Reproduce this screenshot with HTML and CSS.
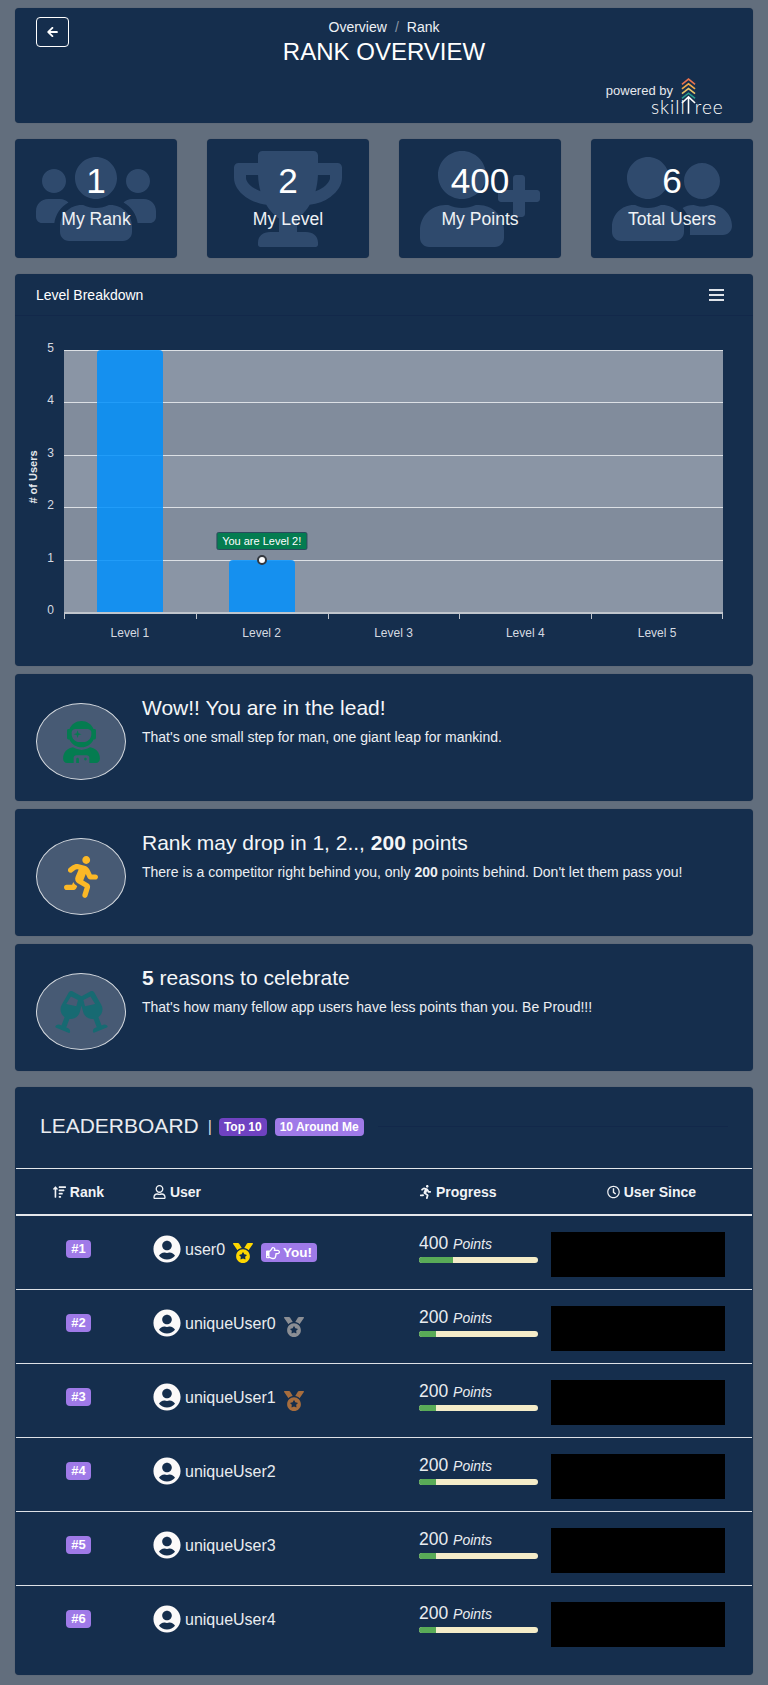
FILE: index.html
```html
<!DOCTYPE html>
<html lang="en">
<head>
    <meta charset="UTF-8">
    <meta name="viewport" content="width=device-width, initial-scale=1.0">
    <title>Rank Overview</title>
    <link rel="stylesheet" href="styles.css">
</head>
<body>
    <svg class="defs" aria-hidden="true">
        <symbol id="i-user-circle" viewBox="0 0 496 512"><path d="M248 8C111 8 0 119 0 256s111 248 248 248 248-111 248-248S385 8 248 8zm0 96c48.6 0 88 39.4 88 88s-39.4 88-88 88-88-39.4-88-88 39.4-88 88-88zm0 344c-58.7 0-111.3-26.6-146.5-68.2 18.8-35.4 55.6-59.8 98.5-59.8 2.4 0 4.8.4 7.1 1.1 13 4.2 26.6 6.9 40.9 6.9 14.3 0 28-2.7 40.9-6.9 2.3-.7 4.7-1.1 7.1-1.1 42.9 0 79.7 24.4 98.5 59.8C359.3 421.4 306.7 448 248 448z"/></symbol>
        <symbol id="i-medal" viewBox="0 0 512 512"><path d="M223.75 130.75L154.62 15.54A31.997 31.997 0 0 0 127.18 0H16.03C3.08 0-4.5 14.57 2.92 25.18l111.27 158.96c29.72-27.77 67.52-46.83 109.56-53.39zM495.97 0H384.82c-11.24 0-21.66 5.9-27.44 15.54l-69.13 115.21c42.04 6.56 79.84 25.62 109.56 53.38L509.08 25.18C516.5 14.57 508.92 0 495.97 0zM256 160c-97.2 0-176 78.8-176 176s78.8 176 176 176 176-78.8 176-176-78.8-176-176-176zm92.52 157.26l-37.93 36.96 8.97 52.22c1.6 9.36-8.26 16.51-16.65 12.09L256 393.88l-46.9 24.65c-8.4 4.45-18.25-2.74-16.65-12.09l8.97-52.22-37.93-36.96c-6.82-6.64-3.05-18.23 6.35-19.59l52.43-7.64 23.43-47.52c2.11-4.28 6.19-6.39 10.28-6.39 4.11 0 8.22 2.14 10.34 6.39l23.43 47.52 52.43 7.64c9.4 1.36 13.17 12.95 6.35 19.59z"/></symbol>
        <symbol id="i-running" viewBox="0 0 416 512"><path d="M272 96c26.51 0 48-21.49 48-48S298.51 0 272 0s-48 21.49-48 48 21.49 48 48 48zM113.69 317.47l-14.8 34.52H32c-17.67 0-32 14.33-32 32s14.33 32 32 32h77.45c19.25 0 36.58-11.44 44.11-29.09l8.79-20.52-10.67-6.3c-17.32-10.23-30.06-25.37-37.99-42.61zM384 223.99h-44.03l-26.06-53.25c-12.5-25.55-35.45-44.23-61.78-50.94l-71.08-21.14c-28.3-6.8-57.77-.55-80.84 17.14l-39.67 30.41c-14.03 10.75-16.69 30.83-5.92 44.86s30.84 16.66 44.86 5.92l39.69-30.41c7.67-5.89 17.44-8 25.27-6.14l14.7 4.37-37.46 87.39c-12.62 29.48-1.31 64.01 26.3 80.31l84.98 50.17-27.47 87.73c-5.28 16.86 4.11 34.81 20.97 40.09 3.19 1 6.41 1.48 9.58 1.48 13.61 0 26.23-8.77 30.52-22.45l31.64-101.06c5.91-20.77-2.89-43.08-21.64-54.39l-61.24-36.14 31.31-78.28 20.27 41.43c8 16.34 24.92 26.89 43.11 26.89H384c17.67 0 32-14.33 32-32s-14.33-31.99-32-31.99z"/></symbol>
    </svg>

    <header class="card page-header">
        <a class="back-btn" href="#">
            <svg class="back-icon" viewBox="0 0 448 512"><path d="M257.5 445.1l-22.2 22.2c-9.4 9.4-24.6 9.4-33.9 0L7 273c-9.4-9.4-9.4-24.6 0-33.9L201.4 44.7c9.4-9.4 24.6-9.4 33.9 0l22.2 22.2c9.5 9.5 9.3 25-.4 34.3L136.6 216H424c13.3 0 24 10.7 24 24v32c0 13.3-10.7 24-24 24H136.6l120.5 114.8c9.8 9.3 10 24.8.4 34.3z"/></svg>
        </a>
        <div class="crumbs"><span>Overview</span><span class="crumb-sep">/</span><span>Rank</span></div>
        <h1 class="page-title">RANK OVERVIEW</h1>
        <div class="powered">
            <span class="powered-by">powered by</span>
            <div class="logo">
                <svg class="logo-arrows" viewBox="0 0 16 38" fill="none" stroke-width="1.7">
                    <path d="M1 6.5 8 1 15 6.5" stroke="#e8734f"/>
                    <path d="M1 11.5 8 6 15 11.5" stroke="#f0a94a"/>
                    <path d="M1 16.5 8 11 15 16.5" stroke="#e9c46a"/>
                    <path d="M1 21.5 8 16 15 21.5" stroke="#2a9d8f"/>
                    <path d="M1 26.5 8 20 15 26.5M8 20V38" stroke="#fff"/>
                </svg>
                <span class="logo-text">skill<span class="logo-gap"></span>ree</span>
            </div>
        </div>
    </header>

    <section class="stats">
        <div class="card stat">
            <svg class="stat-icon" viewBox="0 0 640 512"><path d="M96 224c35.3 0 64-28.7 64-64s-28.7-64-64-64-64 28.7-64 64 28.7 64 64 64zm448 0c35.3 0 64-28.7 64-64s-28.7-64-64-64-64 28.7-64 64 28.7 64 64 64zm32 32h-64c-17.6 0-33.5 7.1-45.1 18.6 40.3 22.1 68.9 62 75.1 109.4h66c17.7 0 32-14.3 32-32v-32c0-35.3-28.7-64-64-64zm-256 0c61.9 0 112-50.1 112-112S381.9 32 320 32 208 82.1 208 144s50.1 112 112 112zm76.8 32h-8.3c-20.8 10-43.9 16-68.5 16s-47.6-6-68.5-16h-8.3C179.6 288 128 339.6 128 403.2V432c0 26.5 21.5 48 48 48h288c26.5 0 48-21.5 48-48v-28.8c0-63.6-51.6-115.2-115.2-115.2zm-223.7-13.4C161.5 263.1 145.6 256 128 256H64c-35.3 0-64 28.7-64 64v32c0 17.7 14.3 32 32 32h65.9c6.3-47.4 34.9-87.3 75.2-109.4z"/></svg>
            <div class="stat-value">1</div>
            <div class="stat-label">My Rank</div>
        </div>
        <div class="card stat">
            <svg class="stat-icon trophy" viewBox="0 0 576 512"><path d="M552 64H448V24c0-13.3-10.7-24-24-24H152c-13.3 0-24 10.7-24 24v40H24C10.7 64 0 74.7 0 88v56c0 35.7 22.5 72.4 61.9 100.7 31.5 22.7 69.8 37.1 110 41.7C203.3 338.5 240 360 240 360v72h-48c-35.3 0-64 20.7-64 56v12c0 6.6 5.4 12 12 12h296c6.6 0 12-5.4 12-12v-12c0-35.3-28.7-56-64-56h-48v-72s36.7-21.5 68.1-73.6c40.3-4.6 78.6-19 110-41.7 39.3-28.3 61.9-65 61.9-100.7V88c0-13.3-10.7-24-24-24zM99.3 192.8C74.9 175.2 64 155.6 64 144v-16h64.2c1 32.6 5.8 61.2 12.8 86.2-15.1-5.2-29.2-12.4-41.7-21.4zM512 144c0 16.1-17.7 36.1-35.3 48.8-12.5 9-26.7 16.2-41.8 21.4 7-25 11.8-53.6 12.8-86.2H512v16z"/></svg>
            <div class="stat-value">2</div>
            <div class="stat-label">My Level</div>
        </div>
        <div class="card stat">
            <svg class="stat-icon" viewBox="0 0 640 512"><path d="M624 208h-64v-64c0-8.8-7.2-16-16-16h-32c-8.8 0-16 7.2-16 16v64h-64c-8.8 0-16 7.2-16 16v32c0 8.8 7.2 16 16 16h64v64c0 8.8 7.2 16 16 16h32c8.8 0 16-7.2 16-16v-64h64c8.8 0 16-7.2 16-16v-32c0-8.8-7.2-16-16-16zm-400 48c70.7 0 128-57.3 128-128S294.7 0 224 0 96 57.3 96 128s57.3 128 128 128zm89.6 32h-16.7c-22.2 10.2-46.9 16-72.9 16s-50.6-5.8-72.9-16h-16.7C60.2 288 0 348.2 0 422.4V464c0 26.5 21.5 48 48 48h352c26.5 0 48-21.5 48-48v-41.6c0-74.2-60.2-134.4-134.4-134.4z"/></svg>
            <div class="stat-value">400</div>
            <div class="stat-label">My Points</div>
        </div>
        <div class="card stat">
            <svg class="stat-icon" viewBox="0 0 640 512"><path d="M192 256c61.9 0 112-50.1 112-112S253.9 32 192 32 80 82.1 80 144s50.1 112 112 112zm76.8 32h-8.3c-20.8 10-43.9 16-68.5 16s-47.6-6-68.5-16h-8.3C51.6 288 0 339.6 0 403.2V432c0 26.5 21.5 48 48 48h288c26.5 0 48-21.5 48-48v-28.8c0-63.6-51.6-115.2-115.2-115.2zM480 256c53 0 96-43 96-96s-43-96-96-96-96 43-96 96 43 96 96 96zm48 32h-3.8c-13.9 4.8-28.6 8-44.2 8s-30.3-3.2-44.2-8H432c-20.4 0-39.2 5.9-55.7 15.4 24.4 26.3 39.7 61.2 39.7 99.8v38.4c0 2.2-.5 4.3-.6 6.4H592c26.5 0 48-21.5 48-48 0-61.9-50.1-112-112-112z"/></svg>
            <div class="stat-value">6</div>
            <div class="stat-label">Total Users</div>
        </div>
    </section>

    <section class="card chart-card">
        <div class="chart-head">
            <span>Level Breakdown</span>
            <span class="burger"><i></i><i></i><i></i></span>
        </div>
        <div class="chart">
            <div class="y-title">
                <span># of Users</span>
            </div>
            <div class="y-axis">
                <span>5</span><span>4</span><span>3</span><span>2</span><span>1</span><span>0</span>
            </div>
            <div class="plot">
                <div class="band"></div><div class="band"></div><div class="band"></div><div class="band"></div><div class="band"></div>
                <div class="bars">
                    <div class="bar-slot"><div class="bar bar-full"></div></div>
                    <div class="bar-slot">
                        <div class="bar bar-one">
                            <div class="marker"></div>
                            <div class="chart-tip">You are Level 2!</div>
                        </div>
                    </div>
                    <div class="bar-slot"></div>
                    <div class="bar-slot"></div>
                    <div class="bar-slot"></div>
                </div>
            </div>
            <div class="x-axis">
                <span>Level 1</span><span>Level 2</span><span>Level 3</span><span>Level 4</span><span>Level 5</span>
            </div>
        </div>
    </section>

    <section class="card note">
        <div class="note-badge">
            <svg class="badge-icon astronaut" viewBox="0 0 448 512"><path d="M64 224h13.5c24.7 56.5 80.9 96 146.5 96s121.8-39.5 146.5-96H384c8.8 0 16-7.2 16-16v-96c0-8.8-7.2-16-16-16h-13.5C345.8 39.5 289.6 0 224 0S102.2 39.5 77.5 96H64c-8.8 0-16 7.2-16 16v96c0 8.8 7.2 16 16 16zm40-88c0-22 21.5-40 48-40h144c26.5 0 48 18 48 40v24c0 53-43 96-96 96h-48c-53 0-96-43-96-96v-24zm72 72l12-36 36-12-36-12-12-36-12 36-36 12 36 12 12 36zm151.6 113.4C297.7 340.7 262.2 352 224 352s-73.7-11.3-103.6-30.6C52.9 328.5 0 385 0 454.4v9.6c0 26.5 21.5 48 48 48h80v-64c0-17.7 14.3-32 32-32h128c17.7 0 32 14.3 32 32v64h80c26.5 0 48-21.5 48-48v-9.6c0-69.4-52.9-125.9-120.4-133zM272 448c-8.8 0-16 7.2-16 16s7.2 16 16 16 16-7.2 16-16-7.2-16-16-16zm-96 0c-8.8 0-16 7.2-16 16v48h32v-48c0-8.8-7.2-16-16-16z"/></svg>
        </div>
        <div class="note-body">
            <h4 class="note-title">Wow!! You are in the lead!</h4>
            <p class="note-text">That's one small step for man, one giant leap for mankind.</p>
        </div>
    </section>

    <section class="card note">
        <div class="note-badge">
            <svg class="badge-icon amber"><use href="#i-running"/></svg>
        </div>
        <div class="note-body">
            <h4 class="note-title">Rank may drop in 1, 2.., <b>200</b> points</h4>
            <p class="note-text">There is a competitor right behind you, only <b>200</b> points behind. Don't let them pass you!</p>
        </div>
    </section>

    <section class="card note">
        <div class="note-badge">
            <svg class="badge-icon glasses" viewBox="0 0 640 512"><path fill-rule="evenodd" d="M639.4 433.6c-8.4-20.4-31.8-30.1-52.2-21.6l-22.1 9.2-38.7-101.9c47.9-35 64.8-100.3 34.5-152.8L474.3 16c-8.8-15.3-27.7-21.1-43.5-13.5L320 62.6 209.2 2.5C193.4-5.1 174.5.7 165.7 16L79.3 166.5c-30.3 52.5-13.4 117.8 34.5 152.8L75.1 421.2 53 412c-20.4-8.5-43.8 1.2-52.2 21.6-1.7 4.1.2 8.8 4.3 10.5l162.3 67.4c4.1 1.7 8.7-.2 10.4-4.3 8.4-20.4-1.2-43.8-21.6-52.3l-22.1-9.2L173 340.7c4.4.5 8.8 1.3 13.1 1.3 51.7 0 99.4-33.1 113.4-85.3l20.5-75.9 20.4 75.9c14 52.2 61.7 85.3 113.4 85.3 4.3 0 8.7-.8 13.1-1.3l38.7 101.9-22.1 9.2c-20.4 8.5-30.1 31.9-21.6 52.3 1.7 4.1 6.4 6 10.4 4.3l162.3-67.4c4.2-1.7 6.1-6.4 4.4-10.5zM134 158l57-90 86 43-20 76zM363 187l-20-76 86-43 57 90z"/></svg>
        </div>
        <div class="note-body">
            <h4 class="note-title"><b>5</b> reasons to celebrate</h4>
            <p class="note-text">That's how many fellow app users have less points than you. Be Proud!!!</p>
        </div>
    </section>

    <section class="card board">
        <div class="board-head">
            <h4 class="board-title">LEADERBOARD</h4>
            <span class="board-sep">|</span>
            <span class="tag tag-active">Top 10</span>
            <span class="tag">10 Around Me</span>
            <span class="board-rule"></span>
        </div>
        <table class="rank-table">
            <thead>
                <tr>
                    <th class="col-rank"><svg class="th-icon" viewBox="0 0 512 512"><path d="M304 416h-64a16 16 0 0 0-16 16v32a16 16 0 0 0 16 16h64a16 16 0 0 0 16-16v-32a16 16 0 0 0-16-16zM16 160h48v304a16 16 0 0 0 16 16h32a16 16 0 0 0 16-16V160h48c14.21 0 21.38-17.24 11.31-27.31l-80-96a16 16 0 0 0-22.62 0l-80 96C-5.35 142.74 1.77 160 16 160zm416 0H240a16 16 0 0 0-16 16v32a16 16 0 0 0 16 16h192a16 16 0 0 0 16-16v-32a16 16 0 0 0-16-16zm-64 128H240a16 16 0 0 0-16 16v32a16 16 0 0 0 16 16h128a16 16 0 0 0 16-16v-32a16 16 0 0 0-16-16zM496 32H240a16 16 0 0 0-16 16v32a16 16 0 0 0 16 16h256a16 16 0 0 0 16-16V48a16 16 0 0 0-16-16z"/></svg> Rank</th>
                    <th class="col-user"><svg class="th-icon" viewBox="0 0 448 512"><path d="M313.6 304c-28.7 0-42.5 16-89.6 16-47.1 0-60.8-16-89.6-16C60.2 304 0 364.2 0 438.4V464c0 26.5 21.5 48 48 48h352c26.5 0 48-21.5 48-48v-25.6c0-74.2-60.2-134.4-134.4-134.4zM400 464H48v-25.6c0-47.6 38.8-86.4 86.4-86.4 14.6 0 38.3 16 89.6 16 51.7 0 74.9-16 89.6-16 47.6 0 86.4 38.8 86.4 86.4V464zM224 288c79.5 0 144-64.5 144-144S303.5 0 224 0 80 64.5 80 144s64.5 144 144 144zm0-240c52.9 0 96 43.1 96 96s-43.1 96-96 96-96-43.1-96-96 43.1-96 96-96z"/></svg> User</th>
                    <th class="col-progress"><svg class="th-icon" viewBox="0 0 416 512"><use href="#i-running"/></svg> Progress</th>
                    <th class="col-since"><svg class="th-icon" viewBox="0 0 512 512"><path d="M256 8C119 8 8 119 8 256s111 248 248 248 248-111 248-248S393 8 256 8zm0 448c-110.5 0-200-89.5-200-200S145.5 56 256 56s200 89.5 200 200-89.5 200-200 200zm61.8-104.4l-84.9-61.7c-3.1-2.3-4.9-5.9-4.9-9.7V116c0-6.6 5.4-12 12-12h32c6.6 0 12 5.4 12 12v141.7l66.8 48.6c5.4 3.9 6.5 11.4 2.6 16.8L334.6 349c-3.9 5.3-11.4 6.5-16.8 2.6z"/></svg> User Since</th>
                </tr>
            </thead>
            <tbody>
                <tr>
                    <td class="col-rank"><span class="tag rank-tag">#1</span></td>
                    <td class="col-user"><div class="user-cell"><svg class="avatar"><use href="#i-user-circle"/></svg><span class="user-name">user0</span><svg class="medal gold"><use href="#i-medal"/></svg><span class="tag you-tag"><svg class="you-icon" viewBox="0 0 512 512"><path d="M428.8 137.6h-86.177a115.52 115.52 0 0 0 2.176-22.4c0-47.914-35.072-83.2-92-83.2-45.314 0-57.002 48.537-75.707 78.784-7.735 12.413-16.994 23.317-25.851 33.253l-.131.146-.129.148C135.662 161.807 127.764 168 120.8 168h-2.679c-5.747-4.952-13.536-8-22.12-8H32c-17.673 0-32 12.894-32 28.8v230.4C0 435.106 14.327 448 32 448h64c8.584 0 16.373-3.048 22.12-8h2.679c28.688 0 67.137 40 127.2 40h21.299c62.542 0 98.8-38.658 99.94-91.145 12.482-17.813 18.491-40.785 15.985-62.791A93.148 93.148 0 0 0 393.152 304H428.8c45.435 0 83.2-37.584 83.2-83.2 0-45.099-38.101-83.2-83.2-83.2zm0 118.4h-91.026c12.837 14.669 14.415 42.825-4.95 61.05 11.227 19.646 1.687 45.624-12.925 53.625 6.524 39.128-10.076 61.325-50.6 61.325H248c-45.491 0-77.21-35.913-120-39.676V215.571c25.239-2.964 42.966-21.222 59.075-39.596 11.275-12.65 21.725-25.3 30.799-39.875C232.355 112.712 244.006 80 252.8 80c23.375 0 44 8.8 44 35.2 0 35.2-26.4 53.075-26.4 70.4h158.4c18.425 0 35.2 16.5 35.2 35.2 0 18.975-16.225 35.2-35.2 35.2zM88 384c0 13.255-10.745 24-24 24s-24-10.745-24-24 10.745-24 24-24 24 10.745 24 24z"/></svg>You!</span></div></td>
                    <td class="col-progress"><div class="points"><span class="pts-num">400</span> <em>Points</em></div><div class="track"><div class="fill" style="width:28.6%"></div></div></td>
                    <td class="col-since"><div class="masked"></div></td>
                </tr>
                <tr>
                    <td class="col-rank"><span class="tag rank-tag">#2</span></td>
                    <td class="col-user"><div class="user-cell"><svg class="avatar"><use href="#i-user-circle"/></svg><span class="user-name">uniqueUser0</span><svg class="medal silver"><use href="#i-medal"/></svg></div></td>
                    <td class="col-progress"><div class="points"><span class="pts-num">200</span> <em>Points</em></div><div class="track"><div class="fill" style="width:14.3%"></div></div></td>
                    <td class="col-since"><div class="masked"></div></td>
                </tr>
                <tr>
                    <td class="col-rank"><span class="tag rank-tag">#3</span></td>
                    <td class="col-user"><div class="user-cell"><svg class="avatar"><use href="#i-user-circle"/></svg><span class="user-name">uniqueUser1</span><svg class="medal bronze"><use href="#i-medal"/></svg></div></td>
                    <td class="col-progress"><div class="points"><span class="pts-num">200</span> <em>Points</em></div><div class="track"><div class="fill" style="width:14.3%"></div></div></td>
                    <td class="col-since"><div class="masked"></div></td>
                </tr>
                <tr>
                    <td class="col-rank"><span class="tag rank-tag">#4</span></td>
                    <td class="col-user"><div class="user-cell"><svg class="avatar"><use href="#i-user-circle"/></svg><span class="user-name">uniqueUser2</span></div></td>
                    <td class="col-progress"><div class="points"><span class="pts-num">200</span> <em>Points</em></div><div class="track"><div class="fill" style="width:14.3%"></div></div></td>
                    <td class="col-since"><div class="masked"></div></td>
                </tr>
                <tr>
                    <td class="col-rank"><span class="tag rank-tag">#5</span></td>
                    <td class="col-user"><div class="user-cell"><svg class="avatar"><use href="#i-user-circle"/></svg><span class="user-name">uniqueUser3</span></div></td>
                    <td class="col-progress"><div class="points"><span class="pts-num">200</span> <em>Points</em></div><div class="track"><div class="fill" style="width:14.3%"></div></div></td>
                    <td class="col-since"><div class="masked"></div></td>
                </tr>
                <tr class="last-row">
                    <td class="col-rank"><span class="tag rank-tag">#6</span></td>
                    <td class="col-user"><div class="user-cell"><svg class="avatar"><use href="#i-user-circle"/></svg><span class="user-name">uniqueUser4</span></div></td>
                    <td class="col-progress"><div class="points"><span class="pts-num">200</span> <em>Points</em></div><div class="track"><div class="fill" style="width:14.3%"></div></div></td>
                    <td class="col-since"><div class="masked"></div></td>
                </tr>
            </tbody>
        </table>
    </section>
</body>
</html>
```

FILE: styles.css
```css
html, body {
    height: 100%;
}
body {
    margin: 0;
    padding: 8px 15px 0;
    box-sizing: border-box;
    background-color: #626e7d;
    color: #fff;
    font-family: "Liberation Sans", Arial, sans-serif;
    font-size: 14px;
}
.defs {
    position: absolute;
    width: 0;
    height: 0;
}
.card {
    background-color: #152e4d;
    border-radius: 4px;
    box-shadow: 0 0 1px rgba(0, 0, 0, 0.3);
}

/* header */
.page-header {
    position: relative;
    height: 115px;
    box-sizing: border-box;
    padding-top: 10px;
    text-align: center;
}
.back-btn {
    position: absolute;
    left: 21px;
    top: 9px;
    width: 31px;
    height: 28px;
    border: 1px solid #fff;
    border-radius: 4px;
    display: flex;
    align-items: center;
    justify-content: center;
}
.back-icon {
    width: 11px;
    height: 12px;
    fill: #fff;
}
.crumbs {
    font-size: 14px;
    line-height: 18px;
    color: #eef1f5;
}
.crumb-sep {
    margin: 0 8px;
    color: #8b97a6;
}
.page-title {
    margin: 1px 0 0;
    font-size: 24px;
    line-height: 29px;
    font-weight: 400;
}
.powered {
    position: absolute;
    right: 32px;
    top: 69px;
    display: flex;
    align-items: flex-start;
}
.powered-by {
    font-size: 13px;
    line-height: 14px;
    margin: 7px -22px 0 0;
    color: #e6e9ee;
}
.logo {
    position: relative;
    width: 70px;
    height: 38px;
}
.logo-arrows {
    position: absolute;
    left: 30px;
    top: 0;
    width: 15px;
    height: 38px;
}
.logo-text {
    position: absolute;
    left: 0;
    bottom: 1px;
    font-family: Lato, sans-serif;
    font-weight: 300;
    font-size: 19px;
    line-height: 14px;
    letter-spacing: 1px;
    white-space: nowrap;
}
.logo-gap {
    display: inline-block;
    width: 9px;
}

/* stat cards */
.stats {
    display: grid;
    grid-template-columns: repeat(4, 162px);
    justify-content: space-between;
    margin-top: 16px;
}
.stat {
    position: relative;
    height: 119px;
    box-sizing: border-box;
    padding-top: 21px;
    text-align: center;
    overflow: hidden;
}
.stat-icon {
    position: absolute;
    top: 12px;
    left: 50%;
    width: 120px;
    height: 96px;
    transform: translateX(-50%);
    fill: #2f4a6d;
}
.stat-icon.trophy {
    width: 108px;
}
.stat-value, .stat-label {
    position: relative;
}
.stat-value {
    font-size: 35.2px;
    line-height: 42px;
}
.stat-label {
    font-size: 17.6px;
    line-height: 22px;
    margin-top: 6px;
    color: #eef1f5;
}

/* chart */
.chart-card {
    margin-top: 16px;
    height: 392px;
}
.chart-head {
    display: flex;
    justify-content: space-between;
    align-items: center;
    height: 41px;
    padding: 0 29px 0 21px;
    border-bottom: 1px solid #12284a;
    font-size: 14px;
}
.burger {
    display: flex;
    flex-direction: column;
    gap: 3px;
    width: 15px;
}
.burger i {
    display: block;
    height: 2px;
    background-color: #dfe4ea;
}
.chart {
    position: relative;
    height: 350px;
}
.y-title {
    position: absolute;
    left: 1px;
    top: 30px;
    width: 34px;
    height: 262px;
    display: flex;
    align-items: center;
    justify-content: center;
}
.y-title span {
    display: block;
    white-space: nowrap;
    transform: rotate(-90deg);
    font-size: 11px;
    font-weight: 700;
    color: #e3e7ec;
}
.y-axis {
    position: absolute;
    left: 27px;
    top: 26px;
    width: 12px;
    height: 275px;
    display: flex;
    flex-direction: column;
    justify-content: space-between;
    text-align: right;
    font-size: 12px;
    line-height: 13px;
    color: #d5dae1;
}
.plot {
    position: absolute;
    left: 49px;
    top: 34px;
    width: 659px;
    height: 264px;
    display: flex;
    flex-direction: column;
    border-bottom: 2px solid #c0c5cc;
    box-sizing: border-box;
}
.band {
    flex: 1;
    background-color: #8a95a5;
    border-top: 1px solid #dce0e5;
}
.band:nth-child(even) {
    background-color: #818c9c;
}
.bars {
    position: absolute;
    inset: 0;
    display: flex;
    align-items: flex-end;
}
.bar-slot {
    flex: 1;
    display: flex;
    justify-content: center;
    align-items: flex-end;
}
.bar {
    position: relative;
    width: 66px;
    background-color: rgba(0, 143, 251, 0.85);
    border-radius: 4px 4px 0 0;
}
.bar-full {
    height: 262px;
}
.bar-one {
    height: 52px;
}
.marker {
    position: absolute;
    left: 50%;
    top: -5px;
    width: 6px;
    height: 6px;
    margin-left: -5px;
    background-color: #fff;
    border: 2px solid #33383f;
    border-radius: 50%;
}
.chart-tip {
    position: absolute;
    left: 50%;
    top: -28px;
    transform: translateX(-50%);
    padding: 0 5px;
    height: 16px;
    line-height: 16px;
    white-space: nowrap;
    background-color: #047c50;
    border: 1px solid #2b4a5c;
    border-radius: 2px;
    font-size: 11px;
}
.x-axis {
    position: absolute;
    left: 49px;
    top: 297px;
    width: 659px;
    display: flex;
    padding-top: 13px;
    font-size: 12px;
    line-height: 14px;
    color: #d5dae1;
}
.x-axis span {
    flex: 1;
    text-align: center;
    position: relative;
}
.x-axis span::before {
    content: "";
    position: absolute;
    left: 0;
    top: -13px;
    width: 1px;
    height: 6px;
    background-color: #c0c5cc;
}
.x-axis span:last-child::after {
    content: "";
    position: absolute;
    right: 0;
    top: -13px;
    width: 1px;
    height: 6px;
    background-color: #c0c5cc;
}

/* message cards */
.note {
    display: flex;
    height: 127px;
    margin-top: 8px;
    box-sizing: border-box;
    padding: 29px 21px 0;
}
.note-badge {
    flex: none;
    width: 88px;
    height: 75px;
    display: flex;
    align-items: center;
    justify-content: center;
    border: 1px solid #d3d8de;
    border-radius: 50%;
    background-color: #475a74;
}
.badge-icon {
    width: 34px;
    height: 42px;
}
.astronaut {
    width: 37px;
    fill: #047c50;
}
.amber {
    fill: #fbb826;
}
.glasses {
    width: 53px;
    fill: #176a72;
}
.note-body {
    margin: -8px 0 0 16px;
}
.note-title {
    margin: 0;
    font-size: 21px;
    line-height: 26px;
    font-weight: 400;
    color: #f4f6f8;
}
.note-text {
    margin: 8px 0 0;
    font-size: 14px;
    line-height: 17px;
    color: #eceff3;
}

/* leaderboard */
.board {
    margin-top: 16px;
    height: 588px;
    box-sizing: border-box;
    padding: 0 1px;
}
.board-head {
    display: flex;
    align-items: center;
    height: 79px;
    padding: 0 24px 2px;
}
.board-title {
    margin: -2px 0 0;
    font-size: 21px;
    font-weight: 400;
    color: #e9ecf0;
}
.board-sep {
    margin: 0 7px 0 9px;
    font-size: 16px;
    color: #d8dde3;
}
.board-rule {
    flex: 1;
    height: 1px;
    margin-left: 6px;
    background-color: #12284a;
}
.tag {
    display: inline-block;
    margin-right: 8px;
    padding: 0 5px;
    height: 18px;
    line-height: 18px;
    border-radius: 4px;
    background-color: #9f7ae8;
    font-size: 12px;
    font-weight: 700;
    white-space: nowrap;
}
.tag-active {
    background-color: #6f42c1;
}
.rank-table {
    width: 736px;
    table-layout: fixed;
    border-collapse: collapse;
}
.rank-table th {
    height: 45px;
    padding: 0;
    border-top: 1px solid #e4e7eb;
    border-bottom: 2px solid #e4e7eb;
    font-size: 14px;
    text-align: left;
    color: #f1f3f6;
}
.rank-table td {
    height: 73px;
    padding: 0;
    border-bottom: 1px solid #dde1e6;
    vertical-align: top;
}
.rank-table .col-user {
    padding-left: 12px;
}
.rank-table .last-row td {
    border-bottom: none;
}
.col-rank {
    width: 125px;
    text-align: center !important;
}
.col-user {
    width: 266px;
}
.col-progress {
    width: 132px;
}
.col-since {
    text-align: center !important;
}
.th-icon {
    width: 13px;
    height: 14px;
    fill: #f1f3f6;
    vertical-align: -2px;
}
.rank-tag {
    margin: 24px 0 0;
    font-size: 13px;
}
.user-cell {
    display: flex;
    align-items: flex-start;
    margin-top: 19px;
    height: 28px;
}
.avatar {
    flex: none;
    width: 28px;
    height: 28px;
    fill: #fbf9f9;
}
.user-name {
    margin: 6px 0 0 4px;
    font-size: 16px;
    line-height: 18px;
    color: #e9ecf0;
}
.medal {
    flex: none;
    width: 20px;
    height: 20px;
    margin: 8px 0 0 8px;
}
.gold {
    fill: #ffd700;
}
.silver {
    fill: #8b8e94;
}
.bronze {
    fill: #a76d3d;
}
.you-tag {
    display: flex;
    align-items: center;
    height: 19px;
    line-height: 19px;
    margin: 8px 0 0 8px;
    padding: 0 5px;
    font-size: 13.5px;
}
.you-icon {
    width: 14px;
    height: 14px;
    margin-right: 3px;
    fill: #fff;
}
.points {
    margin-top: 17px;
    font-size: 17.5px;
    line-height: 21px;
    color: #e9ecf0;
}
.points em {
    font-size: 14px;
}
.track {
    width: 119px;
    height: 6px;
    margin-top: 2px;
    border-radius: 3px;
    background-color: #f4ecc9;
    overflow: hidden;
}
.fill {
    height: 100%;
    background-color: #59ab57;
}
.masked {
    width: 174px;
    height: 45px;
    margin: 16px 0 0;
    background-color: #000;
}
```
